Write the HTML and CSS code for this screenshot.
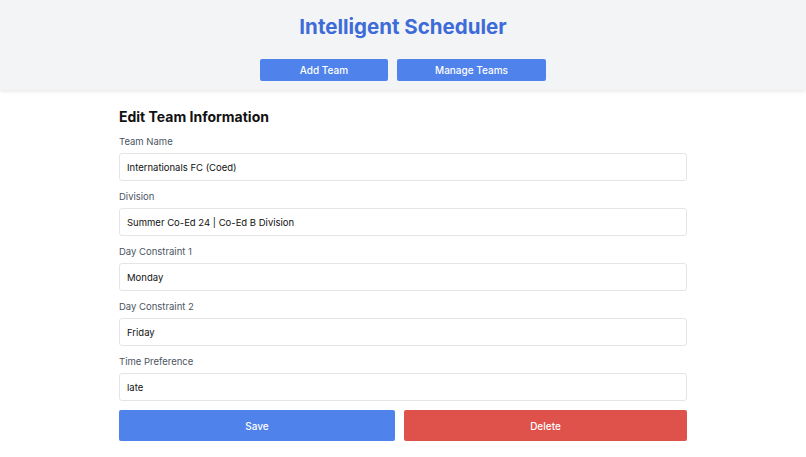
FILE: index.html
```html
<!DOCTYPE html>
<html lang="en">
<head>
  <meta charset="UTF-8">
  <meta name="viewport" content="width=device-width, initial-scale=1.0">
  <title>Intelligent Scheduler</title>
  <link rel="stylesheet" href="styles.css">
</head>
<body>
  <header class="header">
    <h1 class="title">Intelligent Scheduler</h1>
    <nav class="nav">
      <button class="nav-btn add">Add Team</button>
      <button class="nav-btn manage">Manage Teams</button>
    </nav>
  </header>

  <main class="content">
    <h2 class="section-title">Edit Team Information</h2>
    <form class="team-form">
      <div class="field">
        <label for="name">Team Name</label>
        <input id="name" type="text" value="Internationals FC (Coed)">
      </div>
      <div class="field">
        <label for="division">Division</label>
        <input id="division" type="text" value="Summer Co-Ed 24 | Co-Ed B Division">
      </div>
      <div class="field">
        <label for="day1">Day Constraint 1</label>
        <input id="day1" type="text" value="Monday">
      </div>
      <div class="field">
        <label for="day2">Day Constraint 2</label>
        <input id="day2" type="text" value="Friday">
      </div>
      <div class="field">
        <label for="time">Time Preference</label>
        <input id="time" type="text" value="late">
      </div>
      <div class="actions">
        <button type="button" class="action-btn save">Save</button>
        <button type="button" class="action-btn delete">Delete</button>
      </div>
    </form>
  </main>
</body>
</html>
```

FILE: styles.css
```css
/* General */
body {
  margin: 0;
  font-family: 'Inter', 'Liberation Sans', sans-serif;
  background: #ffffff;
  color: #111827;
}

/* Header */
.header {
  background: #f3f4f6;
  padding: 13px 0 9px;
  text-align: center;
  box-shadow: 0 2px 3px rgba(0, 0, 0, 0.08);
}

.title {
  margin: 0 0 18px;
  font-size: 20.5px;
  line-height: 28px;
  font-weight: 700;
  color: #3d6bd8;
}

.nav {
  display: flex;
  justify-content: center;
  gap: 9px;
}

.nav-btn {
  height: 22px;
  border: none;
  border-radius: 2px;
  background: #4f82ea;
  color: #ffffff;
  font-family: inherit;
  font-size: 10px;
  font-weight: 500;
  cursor: pointer;
}

.nav-btn.add {
  width: 128px;
}

.nav-btn.manage {
  width: 149px;
}

/* Form */
.content {
  width: 568px;
  margin: 0 auto;
  padding-top: 17px;
}

.section-title {
  margin: 0 0 8px;
  font-size: 14px;
  line-height: 20px;
  font-weight: 700;
  color: #111111;
}

.field {
  display: flex;
  flex-direction: column;
  margin-bottom: 9px;
}

.field label {
  font-size: 9.5px;
  line-height: 14px;
  color: #4b5563;
  margin-bottom: 4px;
}

.field input {
  box-sizing: border-box;
  height: 28px;
  padding: 0 7px;
  border: 1px solid #e3e5e8;
  border-radius: 3px;
  font-family: inherit;
  font-size: 9.5px;
  color: #111111;
  background: #ffffff;
}

.actions {
  display: flex;
  gap: 9px;
}

.action-btn {
  height: 31px;
  border: none;
  border-radius: 2px;
  color: #ffffff;
  font-family: inherit;
  font-size: 10px;
  font-weight: 500;
  cursor: pointer;
}

.action-btn.save {
  width: 276px;
  background: #4f82ea;
}

.action-btn.delete {
  flex: 1;
  background: #df524c;
}
```
